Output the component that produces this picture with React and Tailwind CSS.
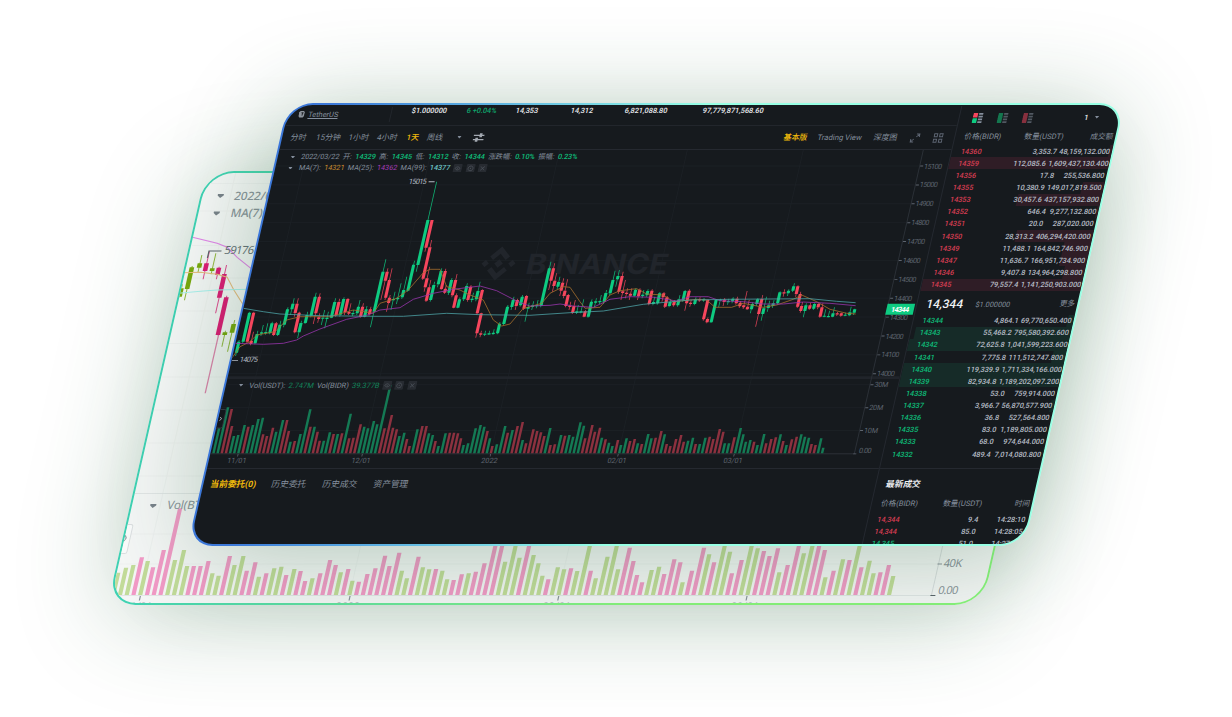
import React from "react";

const SLOPE = 0.2272;

/* Chart points are kept in stage units; this brings them into a slanted card's own box. */
const mapper = (left, top, skewTop) => (x, y) => [x + SLOPE * (y - skewTop) - left, y - top];
const darkAt = mapper(290, 150, 103);
const lightAt = mapper(207.5, 173, 171);

const path = (pts, at) =>
  pts.map(([x, y], i) => {
    const [a, b] = at(x, y);
    return `${i ? "L" : "M"}${a.toFixed(1)} ${b.toFixed(1)}`;
  }).join("");

/* ---------- dark chart data ---------- */
const volTops = [
  175, 112, 117, 168, 198, 195, 165, 170, 165, 147, 143, 193, 198, 173, 185, 150, 150, 183, 215, 213,
  192, 118, 170, 170, 185, 212, 212, 187, 192, 192, 190, 131, 205, 203, 163, 170, 175, 153, 163, 45,
  175, 135, 173, 178, 198, 188, 207, 228, 178, 168, 168, 190, 195, 213, 228, 190, 188, 188, 190, 205,
  225, 220, 175, 165, 170, 183, 205, 228, 223, 168, 188, 180, 168, 156, 210, 220,
  178, 183, 187, 198, 174, 225, 223, 195, 197, 195, 200, 157, 167, 205, 165, 185, 173, 203, 208, 218,
  228, 210, 225, 205, 213, 207, 220, 222, 192, 205, 203, 183, 193, 222, 228, 207, 195, 215, 212, 203,
  222, 222, 203, 200, 207, 177, 185, 220, 220, 202, 174, 193, 215, 210, 215, 225, 192, 220, 207, 202,
  193, 213, 225, 208, 200, 193, 200, 203, 222, 225, 205, 233,
];
const volColors =
  "ggrrgggrgggrrrggrrgrggrgrrggrgrgrrrggggg" +
  "rrrrggrrgrrggrggrrrrgggggrgrggrgrrgr" +
  "rrrrgrrgrggggrrrrgrggrggrrgrggrrgrrrrrgg" +
  "rggrrrrggrggggrggrrrgrgrrgggrrgg";

/* [slot, open, close, high, low]; y in thirds of a pixel below the 200px line */
const early = [
  [-6, 458, 425, 420, 468], [-5, 425, 338, 335, 430], [-4, 338, 425, 335, 430], [-3, 422, 432, 395, 436], [-2, 430, 402, 392, 433],
  [-1, 401, 397, 375, 408], [0, 399, 396, 370, 404], [1, 400, 370, 365, 403], [2, 370, 405, 366, 408], [3, 405, 374, 362, 408],
  [4, 374, 328, 322, 382], [5, 328, 311, 295, 345], [6, 311, 339, 295, 350], [7, 338, 397, 335, 400], [8, 397, 369, 362, 415],
  [9, 369, 345, 335, 372], [10, 347, 290, 278, 352], [11, 290, 340, 280, 372], [12, 352, 357, 340, 368], [13, 356, 353, 330, 375],
  [14, 357, 353, 335, 385], [15, 353, 306, 295, 355], [16, 306, 346, 296, 350], [17, 344, 297, 292, 350], [18, 297, 337, 294, 345],
  [19, 336, 341, 310, 345], [20, 342, 339, 330, 348], [21, 340, 320, 300, 345], [22, 320, 350, 310, 353], [23, 350, 328, 318, 352],
  [24, 328, 343, 320, 348], [25, 335, 215, 178, 382], [26, 215, 242, 205, 300], [27, 240, 293, 205, 300], [28, 293, 309, 285, 335],
  [29, 301, 297, 275, 330], [30, 298, 293, 250, 312], [31, 292, 270, 230, 297], [32, 272, 194, 182, 275], [33, 195, 60, -55, 215],
  [34, 60, 143, 60, 155], [35, 142, 236, 120, 240], [36, 235, 262, 200, 275], [37, 262, 302, 240, 306],
  [38, 300, 255, 245, 305], [39, 253, 213, 205, 262], [40, 213, 267, 206, 270], [41, 266, 278, 255, 282],
  [42, 278, 240, 234, 285], [43, 240, 286, 222, 292], [44, 286, 323, 280, 325], [45, 323, 298, 292, 325],
  [46, 298, 258, 250, 303], [47, 260, 300, 255, 305], [48, 300, 296, 278, 307], [49, 298, 273, 245, 304], [50, 270, 340, 268, 345],
  [51, 340, 400, 338, 413], [52, 400, 404, 392, 412], [53, 404, 401, 392, 408], [54, 403, 400, 392, 405], [55, 402, 398, 388, 405],
  [56, 400, 371, 366, 403], [57, 372, 320, 315, 376], [58, 321, 299, 290, 330], [59, 300, 318, 296, 330],
  [60, 316, 290, 285, 320], [61, 288, 326, 285, 330], [62, 326, 321, 308, 365], [63, 321, 316, 304, 330], [64, 319, 315, 300, 325],
];
const later = [
  [65, 258, 145, 125, 262], [66, 145, 182, 130, 210], [67, 182, 198, 160, 215], [68, 200, 186, 170, 208],
  [69, 188, 212, 175, 228], [70, 212, 228, 178, 235], [71, 225, 258, 222, 262], [72, 257, 261, 245, 270], [73, 258, 278, 240, 282],
  [74, 278, 274, 255, 282], [75, 276, 274, 238, 280], [76, 274, 290, 270, 292], [77, 290, 245, 238, 293], [78, 248, 244, 235, 262],
  [79, 246, 243, 225, 252], [80, 245, 219, 210, 252], [81, 220, 180, 152, 225], [82, 178, 168, 150, 200], [83, 168, 215, 155, 222],
  [84, 214, 219, 180, 240], [85, 218, 222, 205, 235], [86, 221, 227, 205, 240], [87, 227, 209, 205, 230], [88, 209, 229, 205, 240],
  [89, 228, 224, 210, 235], [90, 226, 213, 208, 230], [91, 212, 252, 208, 256], [92, 252, 246, 230, 256], [93, 250, 220, 216, 254],
  [94, 220, 232, 216, 245], [95, 232, 260, 228, 264], [96, 258, 246, 238, 262], [97, 246, 256, 240, 260], [98, 256, 238, 225, 260],
  [99, 240, 213, 210, 245], [100, 212, 250, 208, 272], [101, 248, 252, 240, 260], [102, 252, 238, 232, 256], [103, 238, 241, 232, 246],
  [104, 241, 238, 234, 245], [105, 240, 298, 237, 302], [106, 297, 307, 292, 310], [107, 307, 240, 237, 309], [108, 242, 239, 236, 262],
  [109, 239, 246, 234, 258], [110, 246, 243, 236, 254], [111, 244, 236, 232, 250], [112, 236, 250, 230, 254], [113, 248, 259, 243, 264],
  [114, 256, 262, 213, 267], [115, 260, 268, 240, 270], [116, 268, 252, 246, 280], [117, 252, 238, 234, 258], [118, 237, 282, 225, 320],
  [119, 282, 265, 230, 302], [120, 264, 256, 242, 275], [121, 258, 250, 240, 264], [122, 250, 217, 214, 254], [123, 217, 220, 208, 230],
  [124, 220, 212, 208, 228], [125, 212, 199, 190, 216], [126, 199, 222, 196, 230], [127, 222, 260, 215, 264], [128, 258, 273, 246, 278],
  [129, 273, 256, 250, 292], [130, 256, 266, 248, 270], [131, 266, 252, 248, 270], [132, 252, 262, 248, 268], [133, 262, 290, 250, 293],
  [134, 290, 287, 268, 292], [135, 290, 288, 272, 292], [136, 290, 280, 262, 292], [137, 280, 283, 276, 288], [138, 280, 287, 278, 290],
  [139, 287, 284, 278, 289], [140, 286, 277, 260, 289], [141, 278, 268, 266, 285],
].map(([i, ...r]) => [i, ...r.map((v) => v + 60)]);
const bars = early.concat(later);

const c5 = (pts) => pts.map(([x, y]) => [220 + x / 3, 200 + y / 3]);
const c6 = (pts) => pts.map(([x, y]) => [530 + x / 3, 220 + y / 3]);

const maPurple = [
  ...c5([[45, 430], [130, 433], [190, 430], [230, 420], [250, 408], [300, 387], [380, 358], [440, 346], [480, 330], [540, 323], [580, 298], [640, 280], [700, 268], [780, 258], [830, 272], [880, 298], [905, 310]]),
  ...c6([[0, 258], [60, 256], [90, 252], [130, 258], [190, 262], [240, 238], [300, 230], [370, 232], [440, 243], [480, 230], [535, 230], [570, 242], [640, 245], [700, 252], [760, 252], [820, 246], [900, 250], [977, 257]]),
];
const maCyan = [
  ...c5([[70, 325], [130, 335], [180, 342], [300, 347], [460, 349], [550, 349], [680, 340], [780, 344]]),
  ...c6([[0, 286], [120, 278], [220, 273], [340, 253], [480, 240], [600, 238], [840, 236], [920, 244], [977, 248]]),
];
const maOrange = [
  ...c5([[35, 475], [60, 440], [90, 425], [110, 405], [165, 395], [200, 360], [240, 350], [330, 350], [400, 330], [460, 340], [480, 310], [530, 295], [565, 270], [610, 218], [630, 208], [660, 208], [680, 260], [720, 270], [750, 285], [790, 300], [820, 360], [845, 378], [870, 372], [910, 325]]),
  ...c6([[0, 260], [35, 250], [60, 220], [100, 200], [120, 202], [150, 245], [165, 265], [210, 262], [240, 225], [270, 212], [320, 206], [350, 222], [400, 225], [430, 245], [500, 238], [530, 240], [555, 262], [605, 262], [640, 250], [700, 262], [740, 255], [790, 238], [815, 225], [860, 245], [900, 268], [950, 280], [977, 282]]),
];

const priceTicks = [15100, 15000, 14900, 14800, 14700, 14600, 14500, 14400, 14300, 14200, 14100, 14000];
const volTicks = [["30M", 384.7], ["20M", 407.7], ["10M", 430.5]];
const months = [["11/01", 27.9], ["12/01", 152.1], ["2022", 280.4], ["02/01", 408], ["03/01", 524]];

function DarkChart() {
  const Y = (y) => y - 150;
  return (
    <svg className="col-start-1 row-start-1 block h-[319px] w-[672px]" viewBox="0 0 672 319" fontFamily="Roboto, sans-serif">
      <g stroke="#1d2126" strokeWidth="0.8">
        {priceTicks.map((t, i) => <path key={t} d={`M0 ${Y(166 + 18.88 * i)}H644`} />)}
        {volTicks.map(([t, y]) => <path key={t} d={`M0 ${Y(y)}H644`} />)}
        {months.map(([t, x]) => <path key={t} d={`M${x} 0V304`} />)}
      </g>
      <g fill="#21252b">
        <g transform="translate(245 113.5) scale(1.36)">
          <path d="M0-12.5 7.3-5.2 4.6-2.5 0-7.1-4.6-2.5-7.3-5.2ZM0 12.5 7.3 5.2 4.6 2.5 0 7.1-4.6 2.5-7.3 5.2ZM-12.5 0-9.8-2.7-7.1 0-9.8 2.7ZM12.5 0 9.8-2.7 7.1 0 9.8 2.7ZM0-3.2 3.2 0 0 3.2-3.2 0Z" />
        </g>
        <text x="273" y="124" fontFamily="Inter, sans-serif" fontWeight="700" fontSize="28" textLength="142" lengthAdjust="spacingAndGlyphs">BINANCE</text>
      </g>
      <rect x="0" y={Y(376.3)} width="672" height="2.6" fill="#20242a" />
      <path d={`M0 ${Y(453.8)}H644`} stroke="#30353c" strokeWidth="0.8" />
      <path d="M644 0V304" stroke="#2b3037" strokeWidth="1" />

      {volTops.map((t, i) => {
        const h = (250 - t) / 3;
        return <rect key={i} x={1.8 + 4.14 * i} y={Y(453.3) - h} width="2.5" height={h} fill={volColors[i] === "r" ? "#8c313f" : "#147a54"} />;
      })}

      {bars.map(([i, o, c, h, l]) => {
        const x = 27.9 + 4.14 * i;
        const up = c < o;
        const y = (v) => Y(200 + v / 3);
        return (
          <g key={i} fill={up ? "#0ecb81" : "#f6465d"}>
            <rect x={x - 0.4} y={y(h)} width="0.8" height={(l - h) / 3} opacity="0.85" />
            <rect x={x - 1.5} y={y(Math.min(o, c))} width="3.1" height={Math.max(1.2, Math.abs(o - c) / 3)} />
          </g>
        );
      })}
      <g fill="none" strokeWidth="0.75">
        <path d={path(maOrange, darkAt)} stroke="#a8702c" />
        <path d={path(maPurple, darkAt)} stroke="#9a35ae" />
        <path d={path(maCyan, darkAt)} stroke="#4ea3a6" />
      </g>

      <g fill="#b7bdc6" stroke="none" fontSize="7.4">
        <text x="136.7" y={Y(184)} textLength="18">15015</text>
        <path d={`M156.500 ${Y(181.3)}h6v.9h-6z`} />
        <text x="8.3" y={Y(362.5)} textLength="18">14075</text>
        <path d={`M.5 ${Y(360)}h6v.8h-6z`} />
      </g>

      <g fill="#5e656f" fontSize="7.2">
        {priceTicks.map((t, i) => {
          const y = Y(166 + 18.88 * i);
          return (
            <g key={t}>
              <rect x="644.5" y={y - 0.4} width="3" height="0.9" />
              <text x="648.5" y={y + 2.6} textLength="18">{t}</text>
            </g>
          );
        })}
        {volTicks.map(([t, yy]) => (
          <g key={t}>
            <rect x="644.5" y={Y(yy) - 0.4} width="3" height="0.9" />
            <text x="648.5" y={Y(yy) + 2.6} textLength="14">{t}</text>
          </g>
        ))}
        <rect x="643" y={Y(453.4)} width="3" height="0.9" />
        <text x="648" y={Y(453)} textLength="12.5">0.00</text>
        {months.map(([t, x]) => (
          <g key={t}>
            <rect x={x - 0.4} y={Y(454)} width="0.8" height="2.5" />
            <text x={x + 0.4} y={Y(463.5)} textAnchor="middle">{t}</text>
          </g>
        ))}
      </g>
      <rect x="643.3" y={Y(303.8)} width="27.5" height="11" fill="#0ecb81" />
      <text x="648" y={Y(312)} fontSize="7.2" fontWeight="700" fill="#fff" textLength="18">14344</text>
      <rect x="-2" y={Y(409.5)} width="8" height="18.5" rx="1.5" fill="#14171c" stroke="#3a4048" strokeWidth="0.8" />
      <path d={`M1.6 ${Y(417)}l1.7 1.8-1.7 1.8`} fill="none" stroke="#b7bdc6" strokeWidth="0.8" />
    </svg>
  );
}

/* ---------- light chart ---------- */
const lightVol = [
  "278g,263g,255g,232r,243g,262r,210r,85r,240g,210g,258g,258r,258r,243r,280g,287g,228r,255g,228g,272r,247r,290g,280r,265g,260g,285r,267g,273r,303r,295g,280r,240r,255r,277g,267r,302g,305r,282r,265r,227r,258r,218r"
    .split(",").map((s) => [345 - parseInt(s), s.slice(-1)]),
  "122g,145g,80r,112g,118g,117r,122g,148g,150r,133r,130g,125r,100r,35r,30r,95g,40g,83g,40r,75g,100g,137g,148r,112g,118g,115r,123g,40g,122r,145g,80g,40g,118g,53r,93r,135r,157r,120g,110g,132r,88r,97r,157g,122r,53r,73g,97r,40g,65g,130r,90r,30g,55g,63r,78r,55r,127g,105r,40r,70g,35g,30r,60r,142g,122r,88g,90r,40g,112r,92g,130g,127r,105r,138g"
    .split(",").map((s) => [195 - parseInt(s), s.slice(-1)]),
].flat();

const lightCandles = [
  [240, 385, 410, 372, 412, "g"], [267, 322, 387, 318, 421, "g"], [297, 310, 323, 285, 336, "g"], [316, 310, 333, 274, 358, "r"],
  [335, 325, 333, 280, 343, "g"], [353, 323, 345, 320, 358, "r"], [364, 342, 413, 315, 460, "r"], [365, 412, 525, 407, 526, "r"],
  [373, 517, 525, 512, 560, "g"], [397, 492, 518, 480, 575, "g"],
];
const c9 = (pts) => pts.map(([x, y]) => [100 + x / 3, 160 + y / 3]);

function LightChart() {
  const Y = (y) => y - 173;
  const pitch = (888.5 - 112.7) / (lightVol.length - 1);
  const baseX = lightAt(112.7, 595)[0] - 2.1;
  return (
    <svg className="block h-[430px] w-[870px]" viewBox="0 0 870 430" fontFamily="'Noto Sans', sans-serif" fill="#8b939b">
      <g stroke="#eff1f1" strokeWidth="1">
        {[183.5, 211, 245.5, 278, 311, 343.5, 377, 410, 443, 476, 534, 564].map((y) => <path key={y} d={`M0 ${Y(y)}H820`} />)}
        {[139.3, 349, 557.7, 746].map((x) => {
          const u = lightAt(x, 595)[0];
          return <path key={x} d={`M${u} 0V423`} />;
        })}
      </g>
      <path d={`M0 ${Y(493.5)}H820M0 ${Y(595.5)}H820`} stroke="#e3e6e7" strokeWidth="1" />
      <path d={`M${lightAt(931, 595)[0]} 0V422`} stroke="#dadddf" strokeWidth="1" />
      {lightVol.map(([h, c], i) => (
        <rect key={i} x={baseX + pitch * i} y={Y(595) - h / 3} width="4.2" height={h / 3} fill={c === "r" ? "#f39ac7" : "#c3dc9a"} />
      ))}
      <path d={path(c9([[354, 525], [314, 700]]), lightAt)} stroke="#e182ad" strokeWidth="1.3" />
      {lightCandles.map(([x, t, b, h, l, c], i) => {
        const [u] = lightAt(100 + x / 3, 160 + (t + b) / 6);
        return (
          <g key={i} fill={c === "r" ? "#e01a76" : "#79a80c"}>
            <rect x={u - 0.5} y={160 + h / 3 - 173} width="1" height={(l - h) / 3} opacity="0.8" />
            <rect x={u - 2.3} y={160 + t / 3 - 173} width="4.6" height={(b - t) / 3} />
          </g>
        );
      })}
      <g fill="none" strokeWidth="1">
        <path d={path(c9([[270, 230], [310, 240], [350, 250], [380, 262], [410, 292], [455, 328]]), lightAt)} stroke="#e385ea" />
        <path d={path(c9([[245, 338], [300, 337], [350, 343], [380, 352], [400, 390], [435, 445]]), lightAt)} stroke="#e9bd82" />
        <path d={path(c9([[235, 400], [300, 394], [350, 390], [445, 388]]), lightAt)} stroke="#aaf1ee" />
      </g>
      <path d={`M${lightAt(208.5, 251)[0]} ${Y(258)}V${Y(251)}H${lightAt(221, 251)[0]}`} fill="none" stroke="#5b636b" strokeWidth="1.2" />
      <text x={lightAt(223.3, 254.5)[0]} y={Y(254.5)} fontSize="11.2" textLength="29.5" fill="#6a727a">59176</text>
      <g fontSize="11.5">
        <text x={lightAt(233, 199.5)[0]} y={Y(199.7)} fontWeight="500" textLength="62" lengthAdjust="spacingAndGlyphs">2022/03/22</text>
        <text x={lightAt(229.5, 217)[0]} y={Y(217.3)} fontWeight="500">MA(7):</text>
        <text x={lightAt(166, 509)[0]} y={Y(509)}>Vol(BTC)</text>
        <text x={lightAt(942.5, 567)[0]} y={Y(567.3)} fontSize="11" textLength="18.5">40K</text>
        <text x={lightAt(937, 594)[0]} y={Y(594)} fontSize="11" textLength="20">0.00</text>
        <rect x={lightAt(937, 564)[0]} y={Y(563.6)} width="4.5" height="1" />
        <rect x={lightAt(930, 595)[0]} y={Y(595)} width="5" height="1" fill="#5b636b" />
      </g>
      {[[220.5, 194], [216.5, 211.5], [153, 504]].map(([x, y]) => {
        const [u, v] = lightAt(x, y);
        return <path key={y} d={`M${u - 3} ${v}h6v1.5l-3 2.600-3-2.600z`} fill="#7a828b" />;
      })}
      {[139.3, 349, 557.7, 746].map((x, i) => {
        const u = lightAt(x, 598)[0];
        return (
          <g key={x}>
            <rect x={u - 0.5} y={Y(596)} width="1.2" height="4.4" />
            <text x={u} y={Y(609.8)} fontSize="10.5" textAnchor="middle">{["11/01", "2022", "02/01", "03/01"][i]}</text>
          </g>
        );
      })}
      <rect x={-3} y={Y(524.5)} width="8.5" height="29" rx="2" fill="#fbfcfc" stroke="#dcdfe1" />
      <path d={`M0 ${Y(535)}l1.6 3-1.6 3`} fill="none" stroke="#8b939b" />
    </svg>
  );
}

/* ---------- small pieces ---------- */
const Caret = ({ className = "" }) => (
  <svg className={`h-[2.6px] w-[4.4px] shrink-0 ${className}`} viewBox="0 0 5 3"><path d="M0 0h5L2.5 3z" fill="currentColor" /></svg>
);

function Tools() {
  return (
    <span className="flex gap-[3.7px] text-[#4a4f57]">
      {["M1.8 4.2q2.4-3 4.8 0-2.4 3-4.8 0M4.2 3.8v.8", "M4.2 1.9a2.3 2.3 0 1 0 .01 0M4.2 3.6v1.2", "M2.4 2.4l3.6 3.6M6 2.4L2.4 6"].map((d) => (
        <svg key={d} className="size-[8.8px]" viewBox="0 0 8.4 8.4"><rect width="8.4" height="8.4" rx="1" fill="#272b31" /><path d={d} fill="none" stroke="currentColor" strokeWidth=".8" /></svg>
      ))}
    </span>
  );
}

function BookIcon({ a, b }) {
  return (
    <svg className="h-[10px] w-[10px]" viewBox="0 0 10 10">
      <rect width="4.6" height="4.5" fill={a} /><rect y="5.3" width="4.6" height="4.7" fill={b} />
      {a === b && <rect y="4" width="4.6" height="2" fill={a} />}
      <g fill="#848e9c" opacity={a === b ? 0.55 : 1}><rect x="5.6" width="4.4" height="1.7" /><rect x="5.6" y="2.8" width="4.4" height="1.7" /><rect x="5.6" y="5.5" width="4.4" height="1.7" /><rect x="5.6" y="8.2" width="4.4" height="1.7" /></g>
    </svg>
  );
}

const asks = [
  ["14360", "3,353.7", "48,159,132.000", 3], ["14359", "112,085.6", "1,609,437,130.400", 161], ["14356", "17.8", "255,536.800", 0],
  ["14355", "10,380.9", "149,017,819.500", 22], ["14353", "30,457.6", "437,157,932.800", 84], ["14352", "646.4", "9,277,132.800", 2],
  ["14351", "20.0", "287,020.000", 0], ["14350", "28,313.2", "406,294,420.000", 77], ["14349", "11,488.1", "164,842,746.900", 27],
  ["14347", "11,636.7", "166,951,734.900", 27], ["14346", "9,407.8", "134,964,298.800", 21], ["14345", "79,557.4", "1,141,250,903.000", 161],
];
const bids = [
  ["14344", "4,864.1", "69,770,650.400", 6], ["14343", "55,468.2", "795,580,392.600", 156], ["14342", "72,625.8", "1,041,599,223.600", 161],
  ["14341", "7,775.8", "111,512,747.800", 13], ["14340", "119,339.9", "1,711,334,166.000", 161], ["14339", "82,934.8", "1,189,202,097.200", 161],
  ["14338", "53.0", "759,914.000", 0], ["14337", "3,966.7", "56,870,577.900", 4], ["14336", "36.8", "527,564.800", 0],
  ["14335", "83.0", "1,189,805.000", 0], ["14333", "68.0", "974,644.000", 0], ["14332", "489.4", "7,014,080.800", 1],
];

function Book({ rows, ask }) {
  return rows.map(([p, a, t, w]) => (
    <div key={p} className="grid h-[12.13px] shrink-0 items-center">
      <div className={`col-start-1 row-start-1 h-full justify-self-end ${ask ? "bg-[#2f1d26]" : "bg-[#162b28]"}`} style={{ width: w }} />
      <div className="col-start-1 row-start-1 flex items-center gap-[2.4px] pr-[1.5px] pl-[9px] text-[#b7bdc6]">
        <span className={ask ? "text-[#d63d52]" : "text-[#0ebd79]"}>{p}</span>
        <span className="flex-1 text-right">{a}</span>
        <span className="min-w-[48px] text-right">{t}</span>
      </div>
    </div>
  ));
}

function OrderBook() {
  return (
    <aside className="flex w-[160.5px] shrink-0 flex-col overflow-hidden border-l border-[#252930] text-[7.25px] leading-none font-medium whitespace-nowrap">
      <div className="flex h-[23px] shrink-0 items-center pl-[12.5px]">
        <BookIcon a="#f6465d" b="#0ecb81" />
        <span className="ml-[15px]"><BookIcon a="#14774f" b="#14774f" /></span>
        <span className="ml-[15px]"><BookIcon a="#87303e" b="#87303e" /></span>
        <span className="ml-[52px] text-[#eaecef]">1</span>
        <Caret className="ml-[6px] text-[#848e9c]" />
      </div>
      <div className="flex h-[16.2px] shrink-0 items-center pb-[1.5px] pl-[9px] text-[7.6px] font-normal text-[#848e9c]">
        <span className="w-[60px]">价格(BIDR)</span><span className="w-[66px]">数量(USDT)</span><span>成交额</span>
      </div>
      <Book rows={asks} ask />
      <div className="flex h-[24px] shrink-0 items-center pt-[3px] pl-[9px]">
        <span className="text-[12px] text-[#f0f2f5]">14,344</span>
        <span className="ml-[12.5px] text-[7.3px] font-normal text-[#848e9c]">$1.000000</span>
        <span className="ml-auto pr-[2px] text-[7.6px] font-normal text-[#848e9c]">更多</span>
      </div>
      <Book rows={bids} />
      <div className="mt-[8px] flex h-[28px] shrink-0 items-center border-t border-[#252930] pt-[2.5px] pl-[9.5px] text-[8.7px] font-bold text-[#eaecef]">最新成交</div>
      <div className="mb-[3px] flex h-[14px] shrink-0 items-center pt-[1px] pr-[1.5px] pl-[9px] text-[7.6px] font-normal text-[#848e9c]">
        <span className="w-[62px]">价格(BIDR)</span><span>数量(USDT)</span><span className="ml-auto">时间</span>
      </div>
      {[["14,344", "9.4", "14:28:10", 1], ["14,344", "85.0", "14:28:05", 1], ["14,345", "51.0", "14:27:58", 0]].map(([p, a, t, s], i) => (
        <div key={i} className="flex h-[12.13px] shrink-0 items-center pr-[2.5px] pl-[9px] text-[#b7bdc6]">
          <span className={s ? "w-[61px] text-[#d63d52]" : "w-[61px] text-[#0ebd79]"}>{p}</span>
          <span className="w-[40px] text-right">{a}</span><span className="flex-1 text-right">{t}</span>
        </div>
      ))}
    </aside>
  );
}

const L = ({ k, v, c }) => (
  <>
    <span>{k}</span>
    <span className={c}>{v}</span>
  </>
);

function Terminal() {
  return (
    <div className="flex h-full w-full overflow-hidden rounded-[23px] bg-[#161a1e] pt-[1px] font-[Roboto,'Noto_Sans_CJK_SC',sans-serif]">
      <main className="flex w-[672px] shrink-0 flex-col leading-none whitespace-nowrap">
        <header className="flex h-[20px] shrink-0 border-b border-[#22262c] pt-[1px] text-[7.3px] font-medium text-[#eaecef]">
          <div className="flex h-[15px] w-[104px] items-center border-r border-[#22262c] pl-[10.500px] text-[7.4px] font-normal text-[#848e9c]">
            <svg className="mr-[4px] size-[6.4px]" viewBox="0 0 6 6"><path d="M1.4 0h3.2L5.800 1.500v3L4.600 6H1.4L.4 4.800V1.200z" fill="#8d949d" /><path d="M3.600 1.700v2.600M2.500 1.700h2" stroke="#161a1e" strokeWidth=".8" /></svg>
            <span className="underline">TetherUS</span>
          </div>
          <span className="ml-[19.500px] w-[55px]">$1.000000</span>
          <span className="w-[49px] text-[#0fa56c]">6 +0.04%</span>
          <span className="w-[55px]">14,353</span>
          <span className="w-[54px]">14,312</span>
          <span className="w-[78px]">6,821,088.80</span>
          <span>97,779,871,568.60</span>
        </header>
        <nav className="flex h-[24px] shrink-0 items-center border-b border-[#252930] pl-[8.500px] text-[7.9px] text-[#848e9c]">
          <span className="w-[25.500px]">分时</span>
          <span className="w-[32.500px]">15分钟</span>
          <span className="w-[28.500px]">1小时</span>
          <span className="w-[29.500px]">4小时</span>
          <span className="w-[20.500px] font-medium text-[#f0b90b]">1天</span>
          <span className="w-[30px]">周线</span>
          <Caret />
          <svg className="ml-[12px] h-[9px] w-[11px]" viewBox="0 0 11 9" fill="none" stroke="#a3a9b1" strokeWidth="1.2"><path d="M0 2.300h11M0 6.700h11" /><path d="M6 .3h2.600v4H6zM2.400 4.700H5v4H2.400z" fill="#a3a9b1" stroke="none" /></svg>
          <span className="ml-[299px] w-[34px] font-medium text-[#f0b90b]">基本版</span>
          <span className="w-[56px] text-[7.700px]">Trading View</span>
          <span className="w-[37px]">深度图</span>
          <svg className="size-[10px]" viewBox="0 0 10 10" fill="none" stroke="#5e6673"><path d="M6 4l3-3M6 1h3v3M4 6L1 9M4 9H1V6" /></svg>
          <svg className="ml-[12.500px] size-[10px]" viewBox="0 0 10 10" fill="none" stroke="#5e6673"><path d="M.8.8h3v3h-3zM6.200.8h3v3h-3zM.8 6.200h3v3h-3zM6.200 6.200h3v3h-3z" /></svg>
        </nav>
        <section className="grid h-[318px] shrink-0 overflow-hidden">
          <DarkChart />
          <div className="col-start-1 row-start-1 flex flex-col text-[7.200px] text-[#848e9c]">
            <div className="mt-[2.500px] flex h-[9px] items-center gap-[3.500px] pl-[12.500px]">
              <Caret className="mr-[3px]" />
              <span>2022/03/22</span>
              <L k="开:" v="14329" c="font-medium text-[#0ebd79]" />
              <L k="高:" v="14345" c="font-medium text-[#0ebd79]" />
              <L k="低:" v="14312" c="font-medium text-[#0ebd79]" />
              <L k="收:" v="14344" c="font-medium text-[#0ebd79]" />
              <L k="涨跌幅:" v="0.10%" c="font-medium text-[#0ebd79]" />
              <L k="振幅:" v="0.23%" c="font-medium text-[#0ebd79]" />
            </div>
            <div className="mt-[2px] flex h-[9px] items-center gap-[3.400px] pl-[13px]">
              <Caret className="mr-[3px]" />
              <L k="MA(7):" v="14321" c="text-[#c98a2e]" />
              <L k="MA(25):" v="14362" c="text-[#a63bb8]" />
              <L k="MA(99):" v="14377" c="font-medium text-[#6cc5c6]" />
              <Tools />
            </div>
            <div className="mt-[208.500px] flex h-[9px] items-center gap-[3.200px] pl-[13px] text-[7.450px]">
              <Caret className="mr-[3px]" />
              <L k="Vol(USDT):" v="2.747M" c="text-[#12845a]" />
              <L k="Vol(BIDR)" v="39.377B" c="text-[#12845a]" />
              <Tools />
            </div>
          </div>
        </section>
        <footer className="flex flex-1 border-t border-[#252930] pt-[10.500px] pl-[7px] text-[8.700px] text-[#848e9c]">
          <span className="w-[61px] font-bold text-[#f0b90b]">当前委托(0)</span>
          <span className="w-[51px]">历史委托</span>
          <span className="w-[51px]">历史成交</span>
          <span>资产管理</span>
        </footer>
      </main>
      <OrderBook />
    </div>
  );
}

export default function App() {
  return (
    <div className="grid h-[717px] w-[1232px] overflow-hidden bg-white">
      <div className="col-start-1 row-start-1 mt-[171px] ml-[205.5px] h-[434px] w-[874.5px] origin-top-left -skew-x-[12.8deg] rounded-[28px] bg-linear-to-r from-[#3fd2b4] to-[#8af57c] to-60% p-[2px] shadow-[0_10px_100px_rgba(28,92,50,0.28)]">
        <div className="h-full w-full overflow-hidden rounded-[26px] bg-[#f6f7f7]">
          <LightChart />
        </div>
      </div>
      <div className="col-start-1 row-start-1 mt-[103px] ml-[288px] h-[443px] w-[836.5px] origin-top-left -skew-x-[12.8deg] rounded-[25px] bg-linear-to-r from-[#3c78d8] from-5% to-[#98ffe4] to-50% p-[2px] shadow-[0_10px_100px_rgba(28,92,50,0.32)]">
        <Terminal />
      </div>
    </div>
  );
}
